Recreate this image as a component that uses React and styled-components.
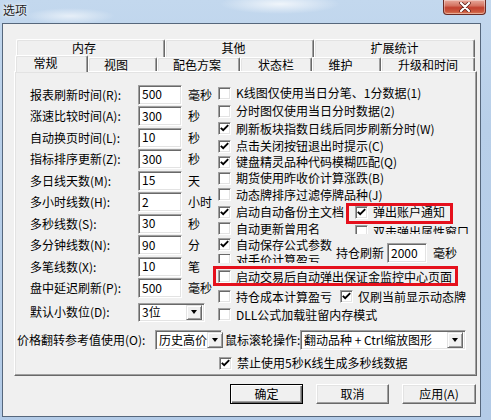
import React from 'react';
import styled, { createGlobalStyle } from 'styled-components';

const FONT = `"Noto Sans CJK SC", "Noto Sans", sans-serif`;

const GlobalStyle = createGlobalStyle`
  html, body { margin: 0; padding: 0; }
  body {
    width: 491px; height: 420px; overflow: hidden;
    font-family: ${FONT}; font-size: 12px; color: #000;
    background: #b9d1ea;
  }
  * { box-sizing: border-box; }
`;

const Window = styled.div`
  width: 491px;
  height: 420px;
  display: flex;
  flex-direction: column;
  background:
    radial-gradient(ellipse 60px 10px at 280px 4px, rgba(255,255,255,0.75), rgba(255,255,255,0) 100%),
    radial-gradient(ellipse 45px 8px at 70px 16px, rgba(255,255,255,0.6), rgba(255,255,255,0) 100%),
    linear-gradient(180deg, #c3d8ee 0%, #b8cfe9 30%, #b3cbe7 100%);
`;

const TitleBar = styled.div`
  height: 23px;
  flex: none;
  display: flex;
  align-items: flex-start;
  padding-left: 3px;
`;

const Title = styled.span`
  margin-top: 4px;
  font-size: 12px;
  line-height: 12px;
  color: #1b1b1b;
  text-shadow: 0 0 5px rgba(255, 255, 255, 0.95), 0 0 2px rgba(255, 255, 255, 0.9);
`;

const CloseButton = styled.div`
  margin-left: auto;
  margin-right: 5px;
  width: 43px;
  height: 15px;
  border: 1px solid #6a2a24;
  border-top: none;
  border-radius: 0 0 4px 4px;
  background: linear-gradient(180deg, #e8a99c 0%, #d47462 40%, #c2412f 55%, #cc5a3f 85%, #e08a66 100%);
  box-shadow: inset 0 0 0 1px rgba(255, 255, 255, 0.35);
  display: flex;
  align-items: center;
  justify-content: center;
`;

const ClientArea = styled.div`
  flex: 1;
  margin: 0 10px 3px 2px;
  border: 1px solid #56677c;
  background: #f0f0f0;
  display: flex;
  flex-direction: column;
  padding: 15px 0 0 11px;
`;

const TabControl = styled.div`
  width: 463px;
  display: flex;
  flex-direction: column;
`;

const TabRow = styled.div`
  display: flex;
  align-items: flex-start;
  height: ${p => p.$h}px;
  margin-left: ${p => p.$left}px;
  margin-top: ${p => p.$top || 0}px;
`;

const Tab = styled.div`
  width: ${p => p.$w}px;
  height: ${p => p.$h}px;
  margin-top: ${p => p.$top || 0}px;
  flex: none;
  border-top: 1px solid #fff;
  border-left: 1px solid #fff;
  border-right: 1px solid #696969;
  border-radius: 2px 2px 0 0;
  box-shadow: inset -1px 0 #a0a0a0, inset 1px 1px #e3e3e3;
  background: #f0f0f0;
  display: flex;
  justify-content: center;
  padding-top: ${p => p.$pad}px;
  padding-right: ${p => p.$shift || 0}px;
  line-height: 12px;
  white-space: nowrap;
  position: relative;
  z-index: ${p => (p.$selected ? 3 : 1)};
`;

const Panel = styled.div`
  position: relative;
  z-index: 2;
  width: 463px;
  height: 305px;
  border-top: 1px solid #fff;
  border-left: 1px solid #fff;
  border-right: 1px solid #696969;
  border-bottom: 1px solid #696969;
  box-shadow: inset -1px -1px #a0a0a0, inset 1px 1px #e3e3e3;
  background: #f0f0f0;
  padding: 12px 0 0 2px;
  display: flex;
  flex-direction: column;
`;

const Main = styled.div`
  display: flex;
  align-items: flex-start;
  height: 239px;
`;

const LeftCol = styled.div`
  width: 188px;
  margin-left: 13px;
  display: flex;
  flex-direction: column;
`;

const FieldRow = styled.div`
  display: grid;
  grid-template-columns: 108px ${p => p.$field}px auto;
  align-items: center;
  height: ${p => p.$h || 21.5}px;
  margin-top: ${p => p.$top || 0}px;
  white-space: nowrap;
  line-height: 14px;
`;

const Unit = styled.span`
  padding-left: 6px;
`;

const sunken = `
  border: 1px solid;
  border-color: #a0a0a0 #fff #fff #a0a0a0;
  box-shadow: inset 1px 1px #696969, inset -1px -1px #e3e3e3;
  background: #fff;
`;

const TextBox = styled.div`
  ${sunken}
  width: ${p => p.$w}px;
  height: 20px;
  padding: 0 0 1px 3px;
  display: flex;
  align-items: center;
  line-height: 14px;
`;

const Combo = styled.div`
  ${sunken}
  width: ${p => p.$w}px;
  height: ${p => p.$h}px;
  padding: 1px 2px 1px 3px;
  display: flex;
  align-items: center;
  line-height: 14px;
  white-space: nowrap;
  flex: none;
`;

const DropButton = styled.span`
  margin-left: auto;
  width: 16px;
  align-self: stretch;
  flex: none;
  background: #f0f0f0;
  border: 1px solid;
  border-color: #e3e3e3 #696969 #696969 #e3e3e3;
  box-shadow: inset 1px 1px #fff, inset -1px -1px #a0a0a0;
  display: flex;
  align-items: center;
  justify-content: center;
`;

const Arrow = styled.span`
  width: 0;
  height: 0;
  border-left: 3.5px solid transparent;
  border-right: 3.5px solid transparent;
  border-top: 4px solid #000;
`;

const RightCol = styled.div`
  width: 257px;
  display: grid;
  grid-template-columns: 118px 1fr;
  grid-template-rows: 18px 18px 17.5px 17px 15.5px 16px 17.5px 17px 16px 16px 16.5px 18.5px 18.5px 17px;
  white-space: nowrap;
  line-height: 14px;
`;

const CheckItem = styled.div`
  display: flex;
  align-items: center;
  gap: 5px;
  grid-column: ${p => p.$span || 'auto'};
  grid-row: ${p => p.$row || 'auto'};
  margin-left: ${p => p.$left || 0}px;
  position: relative;
  height: ${p => (p.$h ? `${p.$h}px` : 'auto')};
  align-self: ${p => (p.$h ? 'start' : 'stretch')};
  flex: none;
`;

const ClipBox = styled.div`
  grid-column: ${p => p.$col};
  grid-row: ${p => p.$row};
  align-self: start;
  margin-top: ${p => p.$top || 0}px;
  height: ${p => p.$h}px;
  overflow: hidden;
  display: flex;
  align-items: ${p => p.$align};
  position: relative;
  z-index: 1;
`;

const Group = styled.div`
  grid-column: ${p => p.$col};
  grid-row: ${p => p.$row};
  display: flex;
  align-items: center;
  align-self: center;
  margin-top: 1px;
`;

const GroupLabel = styled.span`
  margin-right: 3px;
`;

const Box = styled.span`
  ${sunken}
  width: 13px;
  height: 13px;
  flex: none;
  display: inline-flex;
  align-items: center;
  justify-content: center;
`;

const RedMark = styled.span`
  position: absolute;
  left: ${p => p.$x}px;
  top: ${p => p.$y}px;
  width: ${p => p.$w}px;
  height: ${p => p.$h}px;
  border: 3px solid #e5101c;
  pointer-events: none;
  z-index: 5;
`;

const BottomRow = styled.div`
  display: flex;
  align-items: center;
  height: 20px;
  margin-top: 7px;
  white-space: nowrap;
  line-height: 14px;
`;

const BottomLabel = styled.span`
  width: ${p => p.$w}px;
  margin-left: ${p => p.$left || 0}px;
  flex: none;
`;

const CheckRow = styled.div`
  display: flex;
  height: 17px;
  margin-top: 4.5px;
  margin-left: 202px;
  line-height: 14px;
`;

const ButtonRow = styled.div`
  display: flex;
  justify-content: flex-end;
  gap: 13px;
  margin-top: 8px;
  padding-right: 4px;
`;

const Button = styled.div`
  width: ${p => p.$w}px;
  height: 20px;
  background: #f0f0f0;
  border: 1px solid;
  border-color: ${p => (p.$default ? '#000' : '#fff #696969 #696969 #fff')};
  box-shadow: ${p =>
    p.$default
      ? 'inset 1px 1px #fff, inset -1px -1px #696969, inset -2px -2px #a0a0a0'
      : 'inset -1px -1px #a0a0a0, inset 1px 1px #e3e3e3'};
  display: flex;
  align-items: center;
  justify-content: center;
  line-height: 14px;
`;

const Check = () => (
  <svg width="9" height="9" viewBox="0 0 9 9">
    <path d="M0.8 3.8 L3.2 6.2 L8.2 1.2" fill="none" stroke="#000" strokeWidth="1.9" />
  </svg>
);

const CheckBox = ({ checked }) => <Box>{checked ? <Check /> : null}</Box>;

const CloseX = () => (
  <svg width="12" height="10" viewBox="0 0 12 10">
    <path d="M2 1 L10 9 M10 1 L2 9" stroke="#5b1d17" strokeWidth="3.6" strokeLinecap="round" />
    <path d="M2 1 L10 9 M10 1 L2 9" stroke="#fff" strokeWidth="2.2" strokeLinecap="round" />
  </svg>
);

const fields = [
  ['报表刷新时间(R):', '500', '毫秒'],
  ['涨速比较时间(A):', '300', '秒'],
  ['自动换页时间(L):', '10', '秒'],
  ['指标排序更新(Z):', '300', '秒'],
  ['多日线天数(M):', '15', '天'],
  ['多小时线数(H):', '2', '小时'],
  ['多秒线数(S):', '30', '秒'],
  ['多分钟线数(N):', '90', '分'],
  ['多笔线数(X):', '10', '笔'],
  ['盘中延迟刷新(P):', '500', '毫秒'],
];

const topTabs = [
  ['内存', 149, 13],
  ['其他', 149, 12],
  ['扩展统计', 161, 0],
];

const frontTabs = [
  ['常规', 73, 12, true],
  ['视图', 69, 13],
  ['配色方案', 83, 3],
  ['状态栏', 72, 0],
  ['维护', 69, 12],
  ['升级和时间', 94, 0],
];

export default function App() {
  return (
    <>
      <GlobalStyle />
      <Window>
        <TitleBar>
          <Title>选项</Title>
          <CloseButton>
            <CloseX />
          </CloseButton>
        </TitleBar>
        <ClientArea>
          <TabControl>
            <TabRow $h={18} $left={2}>
              {topTabs.map(([t, w, s]) => (
                <Tab key={t} $w={w} $h={18} $pad={2} $shift={s}>
                  {t}
                </Tab>
              ))}
            </TabRow>
            <TabRow $h={16} $left={1} $top={-2}>
              {frontTabs.map(([t, w, s, sel]) => (
                <Tab
                  key={t}
                  $w={w}
                  $shift={s}
                  $selected={sel}
                  $h={sel ? 17 : 14}
                  $top={sel ? 0 : 2}
                  $pad={1}
                >
                  {t}
                </Tab>
              ))}
            </TabRow>
            <Panel>
              <Main>
                <LeftCol>
                  {fields.map(([label, value, unit]) => (
                    <FieldRow key={label} $field={44}>
                      <span>{label}</span>
                      <TextBox $w={44}>{value}</TextBox>
                      <Unit>{unit}</Unit>
                    </FieldRow>
                  ))}
                  <FieldRow $field={67} $h={19} $top={3.5}>
                    <span>默认小数位(D):</span>
                    <Combo $w={67} $h={19}>
                      3位
                      <DropButton>
                        <Arrow />
                      </DropButton>
                    </Combo>
                  </FieldRow>
                </LeftCol>
                <RightCol>
                  <CheckItem $span="1 / -1" $row={1}>
                    <CheckBox />
                    K线图仅使用当日分笔、1分数据(1)
                  </CheckItem>
                  <CheckItem $span="1 / -1" $row={2}>
                    <CheckBox />
                    分时图仅使用当日分时数据(2)
                  </CheckItem>
                  <CheckItem $span="1 / -1" $row={3}>
                    <CheckBox checked />
                    刷新板块指数日线后同步刷新分时(W)
                  </CheckItem>
                  <CheckItem $span="1 / -1" $row={4}>
                    <CheckBox checked />
                    点击关闭按钮退出时提示(C)
                  </CheckItem>
                  <CheckItem $span="1 / -1" $row={5}>
                    <CheckBox checked />
                    键盘精灵品种代码模糊匹配(Q)
                  </CheckItem>
                  <CheckItem $span="1 / -1" $row={6}>
                    <CheckBox />
                    期货使用昨收价计算涨跌(B)
                  </CheckItem>
                  <CheckItem $span="1 / -1" $row={7}>
                    <CheckBox />
                    动态牌排序过滤停牌品种(J)
                  </CheckItem>
                  <CheckItem $span="1" $row={8}>
                    <CheckBox checked />
                    启动自动备份主文档
                  </CheckItem>
                  <CheckItem $span="2" $row={8} $left={19}>
                    <CheckBox checked />
                    弹出账户通知
                    <RedMark $x={-9} $y={-1} $w={107} $h={21} />
                  </CheckItem>
                  <CheckItem $span="1" $row={9}>
                    <CheckBox />
                    自动更新曾用名
                  </CheckItem>
                  <ClipBox $col="2" $row={9} $top={4.5} $h={9} $align="flex-end">
                    <CheckItem $left={19} $h={13}>
                      <CheckBox />
                      双击弹出属性窗口
                    </CheckItem>
                  </ClipBox>
                  <CheckItem $span="1" $row={10}>
                    <CheckBox checked />
                    自动保存公式参数
                  </CheckItem>
                  <Group $col="2" $row="10 / span 2">
                    <GroupLabel>持仓刷新</GroupLabel>
                    <TextBox $w={40}>2000</TextBox>
                    <Unit>毫秒</Unit>
                  </Group>
                  <ClipBox $col="1" $row={11} $top={1} $h={9.5} $align="flex-start">
                    <CheckItem $h={12}>
                      <CheckBox />
                      对手价计算盈亏
                    </CheckItem>
                  </ClipBox>
                  <CheckItem $span="1 / -1" $row={12} $h={15}>
                    <CheckBox />
                    启动交易后自动弹出保证金监控中心页面
                    <RedMark $x={-5} $y={-3} $w={245} $h={20} />
                  </CheckItem>
                  <CheckItem $span="1" $row={13}>
                    <CheckBox />
                    持仓成本计算盈亏
                  </CheckItem>
                  <CheckItem $span="2" $row={13} $left={4}>
                    <CheckBox checked />
                    仅刷当前显示动态牌
                  </CheckItem>
                  <CheckItem $span="1 / -1" $row={14}>
                    <CheckBox />
                    DLL公式加载驻留内存模式
                  </CheckItem>
                </RightCol>
              </Main>
              <BottomRow>
                <BottomLabel $w={138}>价格翻转参考值使用(O):</BottomLabel>
                <Combo $w={67} $h={20}>
                  历史高价
                  <DropButton>
                    <Arrow />
                  </DropButton>
                </Combo>
                <BottomLabel $w={75} $left={3}>鼠标滚轮操作:</BottomLabel>
                <Combo $w={166} $h={20}>
                  翻动品种 + Ctrl缩放图形
                  <DropButton>
                    <Arrow />
                  </DropButton>
                </Combo>
              </BottomRow>
              <CheckRow>
                <CheckItem>
                  <CheckBox checked />
                  禁止使用5秒K线生成多秒线数据
                </CheckItem>
              </CheckRow>
            </Panel>
          </TabControl>
          <ButtonRow>
            <Button $w={73} $default>确定</Button>
            <Button $w={73}>取消</Button>
            <Button $w={74}>应用(A)</Button>
          </ButtonRow>
        </ClientArea>
      </Window>
    </>
  );
}
